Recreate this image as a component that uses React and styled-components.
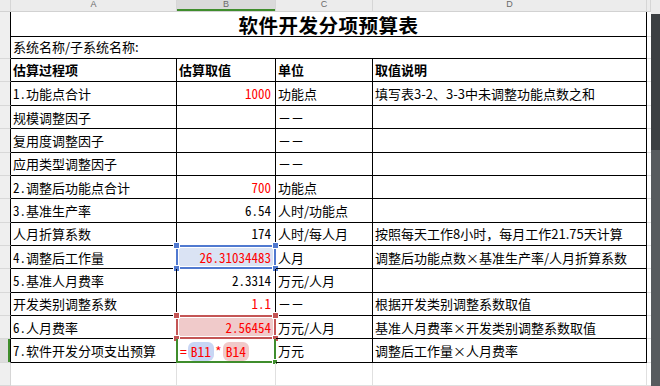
import React from "react";
import styled, { createGlobalStyle, css } from "styled-components";

const GlobalStyle = createGlobalStyle`
  html, body {
    margin: 0;
    padding: 0;
    background: #ffffff;
  }
  body {
    width: 660px;
    height: 386px;
    overflow: hidden;
    font-family: "Noto Sans CJK SC", "Noto Sans", sans-serif;
  }
`;

const COLS = "11px 166px 99px 97px 274px 1fr";

const SELECT = {
  blue: { line: "#5079d0", fill: "#dae3f4" },
  pink: { line: "#c45555", fill: "#f0caca" },
  green: { line: "#3f8d2c", fill: "transparent" },
};

const Screen = styled.div`
  display: flex;
  width: 660px;
  height: 386px;
  overflow: hidden;
`;

const Sheet = styled.div`
  flex: 1;
  display: flex;
  flex-direction: column;
  font-size: 13px;
`;

const Scrollbar = styled.div`
  width: 9px;
  display: flex;
  flex-direction: column;
  background: #575b5e;
`;

const ScrollTop = styled.div`
  height: 14px;
  background: #ececec;
`;

const ScrollThumb = styled.div`
  height: 136px;
  background: #3c4043;
`;

const HeaderBar = styled.div`
  display: grid;
  grid-template-columns: ${COLS};
  height: 12px;
  background: #ececec;
  border-bottom: 1px solid #d2d2d2;
  box-sizing: border-box;
`;

const ColHead = styled.div`
  display: flex;
  align-items: flex-start;
  justify-content: center;
  border-right: 1px solid #d6d6d6;
  font-family: "Liberation Sans", sans-serif;
  font-size: 9px;
  line-height: 8px;
  color: #6a6a6a;
  ${(p) =>
    p.$active &&
    css`
      background: #dadada;
      box-shadow: inset 0 -2px 0 #3f8d2c;
    `}
`;

const Row = styled.div`
  display: grid;
  grid-template-columns: ${COLS};
  height: 24px;
`;

const RowHead = styled.div`
  background: ${(p) => (p.$active ? "#dedede" : "#efefef")};
  border-right: 1px solid ${(p) => (p.$edge ? "#000" : "#d6d6d6")};
  border-bottom: 1px solid #d8d8d8;
  box-sizing: border-box;
  ${(p) =>
    p.$active &&
    css`
      box-shadow: inset -2px 0 0 #3f8d2c;
    `}
`;

const Cell = styled.div`
  position: relative;
  display: flex;
  align-items: center;
  justify-content: ${(p) => (p.$right ? "flex-end" : "flex-start")};
  grid-column: span ${(p) => p.$span || 1};
  padding: ${(p) => p.$pt ?? 2}px ${(p) => (p.$right ? 4 : 2)}px 0 2px;
  border-right: 1px solid ${(p) => (p.$light ? "#e0e0e0" : "#000")};
  border-bottom: 1px solid ${(p) => (p.$light ? "#e0e0e0" : "#000")};
  box-sizing: border-box;
  white-space: nowrap;
  color: ${(p) => (p.$red ? "#ff0000" : "#000")};
  font-weight: ${(p) => (p.$bold ? 700 : 400)};
  font-feature-settings: ${(p) => (p.$half ? '"hwid"' : "normal")};
  line-height: 1.448;
`;

const Filler = styled.div`
  border-bottom: 1px solid #e0e0e0;
`;

const Title = styled(Cell)`
  justify-content: center;
  font-size: 19.5px;
  line-height: 23px;
  font-weight: 700;
  letter-spacing: 0.5px;
`;

const Text = styled.span`
  position: relative;
  z-index: 1;
`;

const Frame = styled.div`
  position: absolute;
  top: ${(p) => (p.$tone === "green" ? 0 : -1)}px;
  left: -1px;
  right: -1px;
  bottom: -1px;
  border: 2px solid ${(p) => SELECT[p.$tone].line};
  border-top-width: ${(p) => (p.$tone === "green" ? 0 : 2)}px;
  background: ${(p) => SELECT[p.$tone].fill};
  box-shadow: inset 0 0 0 1px #ffffff;
  z-index: 0;
`;

const Handle = styled.span`
  position: absolute;
  width: ${(p) => p.$size}px;
  height: ${(p) => p.$size}px;
  background: ${(p) => SELECT[p.$tone].line};
  outline: 1px solid #ffffff;
  ${(p) => (p.$top ? "top" : "bottom")}: -${(p) => Math.ceil(p.$size / 2) + 1}px;
  ${(p) => (p.$left ? "left" : "right")}: -${(p) => Math.ceil(p.$size / 2) + 1}px;
`;

const Formula = styled.span`
  position: relative;
  z-index: 1;
  display: flex;
  align-items: center;
  color: #ff0000;
  padding-left: 1px;
  font-size: 13.5px;
`;

const Ref = styled.span`
  background: ${(p) => p.$bg};
  border-radius: 6px;
  padding: 0 3px;
  margin: 0 1px;
`;

function Selection({ tone }) {
  if (tone === "green") {
    return (
      <Frame $tone={tone}>
        <Handle $tone={tone} $size={4} />
      </Frame>
    );
  }
  return (
    <Frame $tone={tone}>
      <Handle $tone={tone} $size={5} $top $left />
      <Handle $tone={tone} $size={5} $top />
      <Handle $tone={tone} $size={5} $left />
      <Handle $tone={tone} $size={5} />
    </Frame>
  );
}

const rows = [
  { a: "1.功能点合计", b: "1000", red: true, c: "功能点", d: "填写表3-2、3-3中未调整功能点数之和" },
  { a: "规模调整因子", c: "－－" },
  { a: "复用度调整因子", c: "－－" },
  { a: "应用类型调整因子", c: "－－" },
  { a: "2.调整后功能点合计", b: "700", red: true, c: "功能点" },
  { a: "3.基准生产率", b: "6.54", c: "人时/功能点" },
  { a: "人月折算系数", b: "174", c: "人时/每人月", d: "按照每天工作8小时，每月工作21.75天计算" },
  { a: "4.调整后工作量", b: "26.31034483", red: true, c: "人月", d: "调整后功能点数×基准生产率/人月折算系数", sel: "blue" },
  { a: "5.基准人月费率", b: "2.3314", c: "万元/人月" },
  { a: "开发类别调整系数", b: "1.1", red: true, c: "－－", d: "根据开发类别调整系数取值" },
  { a: "6.人月费率", b: "2.56454", red: true, c: "万元/人月", d: "基准人月费率×开发类别调整系数取值", sel: "pink" },
  { a: "7.软件开发分项支出预算", formula: true, c: "万元", d: "调整后工作量×人月费率", sel: "green" },
];

export default function App() {
  return (
    <Screen>
      <GlobalStyle />
      <Sheet>
        <HeaderBar>
          <ColHead />
          <ColHead>A</ColHead>
          <ColHead $active>B</ColHead>
          <ColHead>C</ColHead>
          <ColHead>D</ColHead>
          <ColHead />
        </HeaderBar>

        <Row>
          <RowHead $edge />
          <Title $span={4} $pt={1}>软件开发分项预算表</Title>
          <Filler />
        </Row>
        <Row>
          <RowHead $edge />
          <Cell $span={4} $pt={1}>系统名称/子系统名称:</Cell>
          <Filler />
        </Row>
        <Row>
          <RowHead $edge />
          <Cell $bold $pt={0}>估算过程项</Cell>
          <Cell $bold $pt={0}>估算取值</Cell>
          <Cell $bold $pt={0}>单位</Cell>
          <Cell $bold $pt={0}>取值说明</Cell>
          <Filler />
        </Row>

        {rows.map((r) => (
          <Row key={r.a}>
            <RowHead $edge $active={r.sel === "green"} />
            <Cell $half>{r.a}</Cell>
            <Cell $half $right={!r.formula} $red={r.red}>
              {r.sel && <Selection tone={r.sel} />}
              {r.formula ? (
                <Formula>
                  =<Ref $bg="#c8d6f4">B11</Ref>*<Ref $bg="#f1c9c9">B14</Ref>
                </Formula>
              ) : (
                <Text>{r.b}</Text>
              )}
            </Cell>
            <Cell>{r.c}</Cell>
            <Cell>{r.d}</Cell>
            <Filler />
          </Row>
        ))}

        <Row>
          <RowHead />
          <Cell $light />
          <Cell $light />
          <Cell $light />
          <Cell $light />
          <Filler />
        </Row>
      </Sheet>
      <Scrollbar>
        <ScrollTop />
        <ScrollThumb />
      </Scrollbar>
    </Screen>
  );
}
